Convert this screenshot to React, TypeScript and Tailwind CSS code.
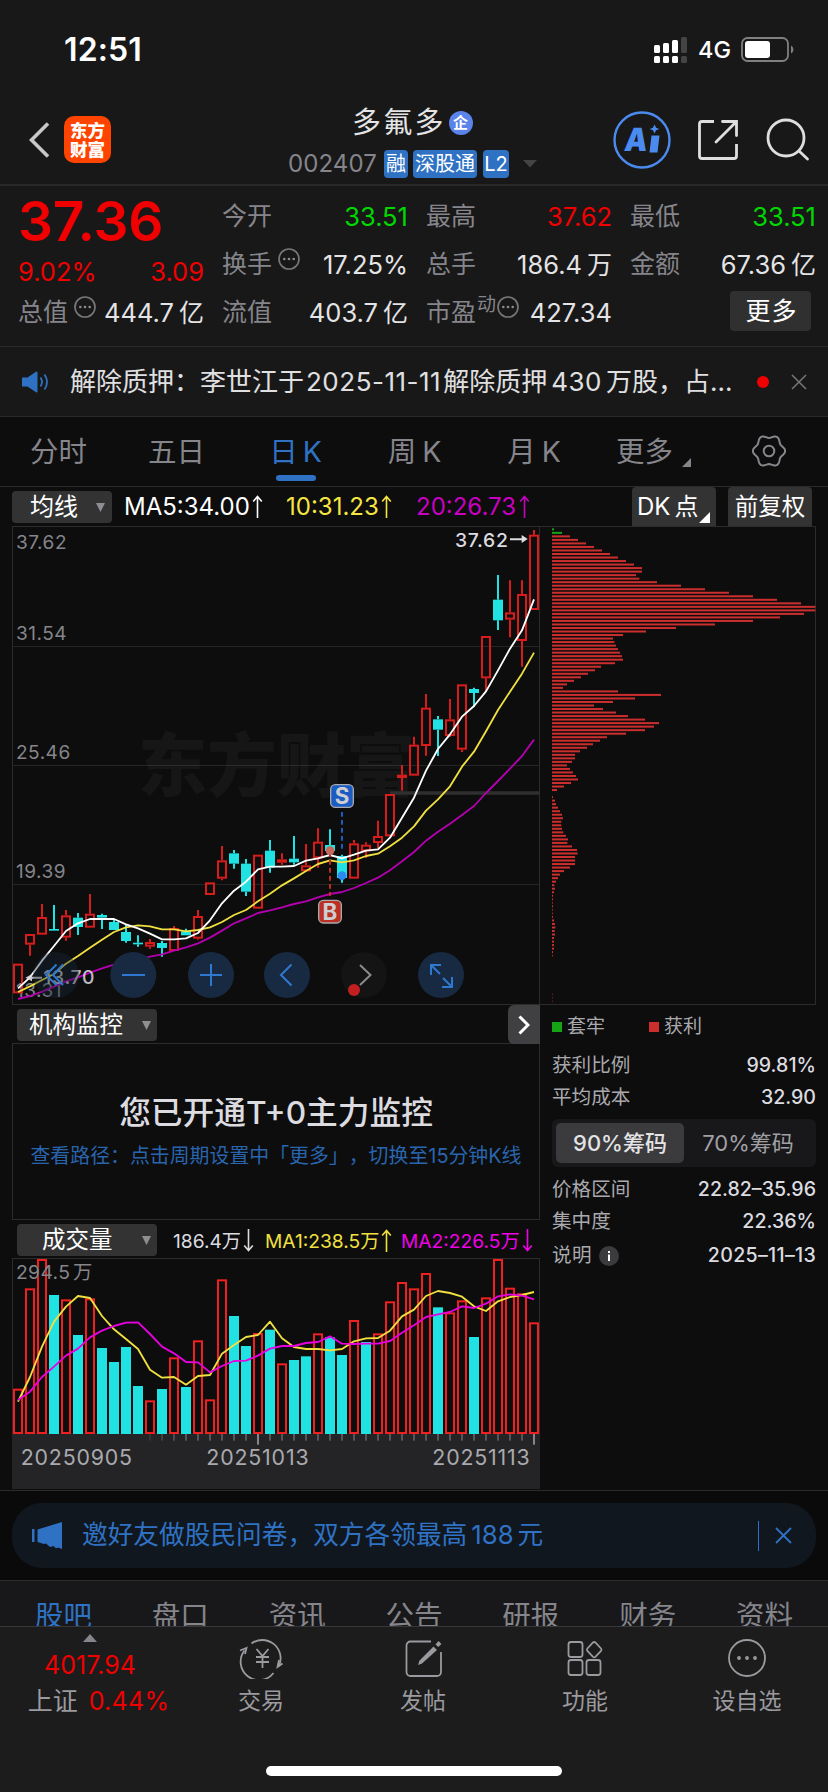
import type { ReactNode } from 'react'

type Candle = [kind: 'r' | 'c', high: number, top: number, bottom: number, low: number]

// Both charts are drawn on a grid three times finer than their size on the page
const X0 = 54
const STEP = 36

const CANDLES: Candle[] = [
  ['r', 1331, 1331, 1420, 1420], ['r', 1242, 1242, 1274, 1307], ['r', 1152, 1191, 1244, 1244], ['c', 1155, 1227, 1232, 1232],
  ['r', 1170, 1186, 1253, 1262], ['c', 1179, 1193, 1221, 1245], ['r', 1122, 1181, 1223, 1223], ['c', 1181, 1185, 1193, 1227],
  ['c', 1198, 1206, 1230, 1230], ['c', 1215, 1236, 1263, 1268], ['c', 1246, 1268, 1273, 1280], ['r', 1257, 1266, 1280, 1286],
  ['c', 1263, 1269, 1284, 1310], ['r', 1218, 1224, 1293, 1293], ['c', 1226, 1234, 1246, 1246], ['r', 1170, 1188, 1256, 1259],
  ['r', 1087, 1087, 1125, 1125], ['r', 978, 1021, 1076, 1081], ['c', 990, 1000, 1031, 1046], ['c', 1017, 1031, 1115, 1128],
  ['r', 1004, 1004, 1166, 1166], ['c', 960, 992, 1043, 1058], ['r', 1000, 1018, 1028, 1034], ['c', 948, 1016, 1027, 1034],
  ['r', 972, 1036, 1054, 1054], ['r', 925, 965, 1015, 1043], ['c', 928, 975, 993, 993], ['c', 1004, 1008, 1074, 1088],
  ['r', 960, 970, 1076, 1076], ['r', 967, 974, 994, 1014], ['r', 902, 948, 969, 985], ['r', 822, 822, 949, 949],
  ['r', 735, 764, 774, 812], ['r', 650, 674, 767, 767], ['r', 522, 563, 678, 707], ['c', 588, 598, 629, 708],
  ['r', 537, 598, 648, 650], ['r', 493, 493, 689, 696], ['c', 503, 507, 519, 560], ['r', 348, 348, 475, 515],
  ['c', 165, 239, 301, 330], ['r', 181, 277, 299, 352], ['r', 181, 222, 363, 440], ['r', 30, 44, 270, 270],
]

const MA5 = [
  1405, 1372, 1322, 1278, 1233, 1210, 1197, 1197, 1197, 1213, 1225, 1241, 1258, 1258, 1255, 1239, 1201, 1150, 1112, 1085, 1048, 1040,
  1040, 1038, 1022, 1015, 1005, 1015, 1004, 992, 988, 953, 893, 833, 752, 687, 643, 590, 558, 514, 451, 386, 331, 238,
]
const MA10 = [
  1416, 1399, 1380, 1362, 1331, 1308, 1283, 1259, 1236, 1222, 1216, 1219, 1228, 1228, 1234, 1230, 1222, 1206, 1185, 1170, 1144, 1121,
  1096, 1075, 1053, 1032, 1021, 1027, 1021, 1008, 1001, 979, 953, 919, 872, 838, 799, 740, 695, 634, 570, 515, 461, 398,
]
const MA20 = [
  1437, 1428, 1415, 1400, 1384, 1372, 1358, 1345, 1334, 1325, 1318, 1310, 1303, 1292, 1282, 1270, 1253, 1232, 1210, 1195, 1179, 1171,
  1162, 1152, 1144, 1132, 1122, 1116, 1104, 1089, 1073, 1051, 1024, 996, 962, 935, 911, 885, 858, 819, 783, 746, 708, 659,
]

const VOLUME: ['r' | 'c', number][] = [
  ['r', 446], ['r', 145], ['r', 57], ['c', 165], ['r', 178], ['c', 285], ['r', 175], ['c', 324], ['c', 366], ['c', 321], ['c', 438],
  ['r', 481], ['c', 447], ['r', 352], ['c', 441], ['r', 301], ['r', 478], ['r', 118], ['c', 228], ['c', 318], ['r', 279], ['c', 269],
  ['r', 370], ['c', 360], ['c', 349], ['r', 280], ['c', 292], ['c', 345], ['r', 240], ['c', 306], ['r', 280], ['r', 184], ['r', 126],
  ['r', 145], ['r', 99], ['c', 202], ['r', 217], ['r', 181], ['c', 291], ['r', 172], ['r', 57], ['r', 143], ['r', 160], ['r', 247],
]
const VMA1 = [
  485, 411, 320, 245, 200, 168, 174, 228, 268, 297, 327, 389, 413, 411, 434, 408, 405, 341, 315, 291, 285, 245, 295, 321, 327, 327,
  331, 327, 304, 295, 294, 272, 229, 209, 168, 153, 159, 170, 199, 213, 184, 171, 165, 156,
]
const VMA2 = [
  480, 455, 411, 380, 347, 326, 292, 272, 258, 248, 247, 282, 320, 340, 366, 367, 397, 378, 363, 362, 347, 326, 318, 318, 309, 306,
  289, 311, 312, 311, 311, 303, 278, 256, 231, 223, 216, 199, 204, 191, 169, 163, 167, 178,
]

const CHIPS = [
  6, 30, 54, 78, 102, 126, 150, 174, 198, 222, 246, 270, 270, 252, 262, 315, 387, 459, 531, 603, 675, 747, 790, 790, 756, 684, 603,
  489, 372, 282, 213, 183, 187, 192, 198, 204, 210, 213, 189, 147, 129, 108, 87, 66, 45, 33, 198, 327, 249, 183, 126, 153, 192, 228,
  279, 321, 306, 279, 222, 165, 144, 123, 105, 84, 69, 69, 60, 45, 54, 63, 72, 78, 57, 36, 15, 0, 3, 9, 12, 18, 24, 30, 33, 28, 28,
  30, 34, 42, 48, 46, 60, 75, 77, 69, 69, 69, 54, 36, 24, 18, 12, 7, 9, 6, 3, 3, 2, 3, 2, 2, 3, 6, 9, 10, 8, 9, 6, 6, 6, 6, 3, 2,
]

// Six soft teeth around the settings icon
const GEAR = Array.from({ length: 72 }, (_, i) => {
  const a = (i * Math.PI) / 36
  const r = 14.6 + 1.5 * Math.cos(6 * a)
  return `${(17 + r * Math.cos(a)).toFixed(2)},${(17 + r * Math.sin(a)).toFixed(2)}`
}).join(' ')

function points(values: number[]): string {
  return values.map((v, i) => `${X0 + i * STEP},${v}`).join(' ')
}

function MoreDots() {
  return (
    <svg width="22" height="22" viewBox="0 0 22 22" className="shrink-0">
      <circle cx="11" cy="11" r="10" fill="none" stroke="#77777b" strokeWidth="1.7" />
      <circle cx="6.3" cy="11" r="1.3" fill="#8a8a8f" />
      <circle cx="11" cy="11" r="1.3" fill="#8a8a8f" />
      <circle cx="15.7" cy="11" r="1.3" fill="#8a8a8f" />
    </svg>
  )
}

function StatusBar() {
  return (
    <div className="flex h-20 items-start justify-between pt-[30px] pr-[33px] pl-[64px]">
      <span className="text-[32px] leading-10 font-semibold tracking-[0.1px] text-white">12:51</span>
      <div className="flex h-10 items-center">
        <svg width="34" height="27" viewBox="0 0 34 27" fill="#fff">
          <rect x="0" y="8" width="6" height="8" rx="1.5" />
          <rect x="9" y="6" width="6" height="10" rx="1.5" />
          <rect x="18" y="3" width="6" height="13" rx="1.5" />
          <rect x="27" y="0" width="6" height="16" rx="1.5" fill="#444" />
          <rect x="0" y="19" width="6" height="7" rx="1.5" />
          <rect x="9" y="19" width="6" height="7" rx="1.5" />
          <rect x="18" y="19" width="6" height="7" rx="1.5" />
          <rect x="27" y="19" width="6" height="7" rx="1.5" fill="#444" />
        </svg>
        <span className="ml-[10px] w-8 text-[23.5px] leading-8 font-medium text-white">4G</span>
        <svg width="54" height="26" viewBox="0 0 54 26" className="ml-[11px]">
          <rect x="1" y="1" width="46" height="23" rx="5.5" fill="none" stroke="#808080" strokeWidth="1.8" />
          <rect x="4" y="4" width="25" height="17" rx="3" fill="#fff" />
          <path d="M50 8.500a4.500 4.500 0 0 1 0 8z" fill="#808080" />
        </svg>
      </div>
    </div>
  )
}

function Header() {
  return (
    <div className="flex h-[106px] items-start border-b-2 border-[#282829] pt-3">
      <div className="flex w-[288px] items-center pt-6 pl-[29px]">
        <svg width="21" height="36" viewBox="0 0 21 36" fill="none" stroke="#c8c8c8" strokeWidth="3.600">
          <path d="M19 1.500 2.500 18 19 34.500" />
        </svg>
        <div className="ml-[14px] flex size-[47px] flex-col items-center justify-center rounded-[10px] bg-[#ff4400] text-[17.500px] leading-[19px] font-black text-white">
          <span>东方</span>
          <span>财富</span>
        </div>
      </div>
      <div className="flex w-[254px] flex-col">
        <div className="mt-[11px] flex h-10 items-center pl-[64px]">
          <span className="text-[29px] leading-10 tracking-[2.200px] text-[#e4e4e6]">多氟多</span>
          <span className="ml-[3px] flex size-6 items-center justify-center rounded-full bg-[#5b84ea] text-[15px] leading-6 font-bold text-white">
            企
          </span>
        </div>
        <div className="mt-[3px] flex h-8 items-center pt-1 text-[20px] text-white">
          <span className="w-24 text-[24px] tracking-[0.1px] text-[#85858b]">002407</span>
          <span className="flex h-7 w-6 items-center justify-center rounded-[4px] bg-[#2f72c4]">融</span>
          <span className="ml-[5px] flex h-7 w-16 items-center justify-center rounded-[4px] bg-[#2f72c4] whitespace-nowrap">深股通</span>
          <span className="ml-[6px] flex h-7 w-[26px] items-center justify-center rounded-[4px] bg-[#2f72c4]">L2</span>
          <svg width="14" height="8" viewBox="0 0 14 8" className="ml-[14px]">
            <path d="M0 0h14L7 7.500z" fill="#444447" />
          </svg>
        </div>
      </div>
      <svg width="268" height="64" viewBox="0 0 268 64" className="mt-4" fill="none">
        <circle cx="100" cy="32" r="27.500" stroke="#4b8bf0" strokeWidth="2.400" />
        <text transform="translate(81.500 43) skewX(-7)" fontSize="32" fontWeight="900" fill="#4b8bf0" textLength="23" lengthAdjust="spacingAndGlyphs" className="font-['Inter']">
          A
        </text>
        <path d="M109.500 27.500h8l-2 17h-8z" fill="#4b8bf0" />
        <path d="M112.500 16.500l1.600 3.200 3.200 1.300-3.200 1.300-1.600 3.200-1.600-3.200-3.200-1.300 3.200-1.300z" fill="#4b8bf0" />
        <g stroke="#dedede" strokeWidth="2.800">
          <path d="M172 13.500H160a2.500 2.500 0 0 0-2.500 2.500V48a2.500 2.500 0 0 0 2.500 2.500H192a2.500 2.500 0 0 0 2.500-2.500V36" />
          <path d="M180.500 13.500h14v14M194 14l-20 20" strokeLinecap="round" />
          <circle cx="244" cy="30" r="18" />
          <path d="M257 43l8.500 8" strokeLinecap="round" />
        </g>
      </svg>
    </div>
  )
}

interface StatProps {
  label: string
  value: string
  unit?: string
  tone?: string
  mark?: ReactNode
  className?: string
}

function Stat({ label, value, unit, tone = 'text-[#e4e4e6]', mark, className = '' }: StatProps) {
  return (
    <div className={`flex h-12 items-center justify-between whitespace-nowrap ${className}`}>
      <span className="flex items-center text-[25px] text-[#85858b]">
        {label}
        {mark}
      </span>
      <span className={`text-[25.500px] ${tone}`}>
        {value}
        {unit && <span className="ml-[5px] text-[25px]">{unit}</span>}
      </span>
    </div>
  )
}

function Quote() {
  return (
    <div className="flex h-[161px] items-start border-b border-[#2a2a2b] pt-[7px] pl-[18px]">
      <div className="w-[186px]">
        <div className="flex h-[55px] items-center pt-[2px] text-[55px] font-semibold tracking-[-0.2px] text-[#f00000]">37.36</div>
        <div className="flex h-12 items-center justify-between text-[25.500px] text-[#f00000]">
          <span>9.02%</span>
          <span>3.09</span>
        </div>
        <Stat label="总值" value="444.7" unit="亿" className="-mt-[7px]" mark={<span className="-mt-3 ml-[6px]"><MoreDots /></span>} />
      </div>
      <div className="ml-[18px] w-[186px]">
        <Stat label="今开" value="33.51" tone="text-[#00d800]" />
        <Stat label="换手" value="17.25%" mark={<span className="-mt-3 ml-[6px]"><MoreDots /></span>} />
        <Stat label="流值" value="403.7" unit="亿" />
      </div>
      <div className="ml-[18px] w-[186px]">
        <Stat label="最高" value="37.62" tone="text-[#f00000]" />
        <Stat label="总手" value="186.4" unit="万" />
        <Stat
          label="市盈"
          value="427.34"
          mark={
            <>
              <span className="-mt-4 ml-px text-[19px]">动</span>
              <span className="-mt-3 ml-px"><MoreDots /></span>
            </>
          }
        />
      </div>
      <div className="ml-[18px] w-[186px]">
        <Stat label="最低" value="33.51" tone="text-[#00d800]" />
        <Stat label="金额" value="67.36" unit="亿" />
        <div className="flex justify-end pt-[2px] pr-[5px]">
          <button type="button" className="h-10 w-[81px] rounded-[4px] bg-[#303030] pl-[2px] text-[25px] leading-10 tracking-[1px] text-white">
            更多
          </button>
        </div>
      </div>
    </div>
  )
}

function Notice() {
  return (
    <div className="flex h-[70px] items-center border-b border-[#2a2a2b] pl-[22px]">
      <svg width="28" height="22" viewBox="0 0 28 22" fill="#2f72c4">
        <path d="M0 6.500h5.500L14 .8q1.500-.8 1.500 1v18.400q0 1.800-1.500 1L5.500 15.500H0z" />
        <path d="M18.500 6.500q3 4.500 0 9M22.500 3.500q5 7.500 0 15" fill="none" stroke="#2f72c4" strokeWidth="1.800" />
      </svg>
      <p className="ml-5 flex w-[662px] items-center text-[26px] whitespace-nowrap text-[#e0e0e2]">
        <span>解除质押：李世江于</span>
        <span className="mx-[2px] tracking-[0.5px]">2025-11-11</span>
        <span>解除质押</span>
        <span className="mx-[4px] tracking-[0.5px]">430</span>
        <span>万股，占</span>
        <span>...</span>
      </p>
      <span className="ml-[25px] size-3 rounded-full bg-[#f00000]" />
      <svg width="16" height="16" viewBox="0 0 16 16" className="ml-[22px]" stroke="#77777b" strokeWidth="1.500">
        <path d="M1 1l14 14M15 1L1 15" />
      </svg>
    </div>
  )
}

function PeriodTabs() {
  return (
    <div className="flex h-[70px] border-b border-[#2a2a2b] bg-[#0d0d0d] pt-[13px] text-[28.500px] leading-[44px] text-[#85858b]">
      <span className="w-[118px] pl-[30px]">分时</span>
      <span className="w-[119px] pl-[30px]">五日</span>
      <span className="flex w-[118px] flex-col items-center text-[#2f72c4]">
        <span className="tracking-[1px]">日<span className="ml-1">K</span></span>
        <span className="mt-[1px] h-[6px] w-10 rounded-[3px] bg-[#2f72c4]" />
      </span>
      <span className="w-[119px] text-center">周<span className="ml-[6px]">K</span></span>
      <span className="w-[120px] text-center">月<span className="ml-[6px]">K</span></span>
      <span className="flex w-[134px] pl-[22px]">
        更多
        <svg width="9" height="9" viewBox="0 0 9 9" className="mt-7 ml-[9px]">
          <path d="M9 0v9H0z" fill="#85858b" />
        </svg>
      </span>
      <svg width="34" height="34" viewBox="0 0 34 34" className="mt-[4px] ml-[24px]" fill="none" stroke="#85858b" strokeWidth="2">
        <polygon points={GEAR} strokeLinejoin="round" />
        <circle cx="17" cy="17" r="5.300" />
      </svg>
    </div>
  )
}

function Caret({ className = '' }: { className?: string }) {
  return (
    <svg width="9" height="9" viewBox="0 0 9 9" className={className}>
      <path d="M0 0h9L4.500 9z" fill="#8e8e93" />
    </svg>
  )
}

function Arrow({ down = false }: { down?: boolean }) {
  return (
    <svg width="11" height="23" viewBox="0 0 11 23" fill="none" stroke="currentColor" strokeWidth="1.600" className={down ? 'rotate-180' : ''}>
      <path d="M5.500 23V1.500M1.200 6.500l4.300-5 4.300 5" />
    </svg>
  )
}

function MaBar() {
  return (
    <div className="flex h-[39px] text-[24px] whitespace-nowrap">
      <div className="mt-[4px] ml-3 flex h-8 w-[100px] items-center rounded-[4px] bg-[#333334] pl-[18px] text-white">
        <span className="w-[66px]">均线</span>
        <Caret />
      </div>
      <div className="flex w-[520px] items-center pl-3">
        <span className="flex w-[162px] items-center gap-[2px] text-white">MA5:34.00<Arrow /></span>
        <span className="flex w-[130px] items-center gap-[2px] text-[#f5e642]">10:31.23<Arrow /></span>
        <span className="flex items-center gap-[3px] text-[#c800c0]">20:26.73<Arrow /></span>
      </div>
      <div className="relative flex h-[39px] w-[84px] items-center rounded-t-[4px] bg-[#333334] pl-[5px] text-white">
        DK<span className="ml-1">点</span>
        <svg width="11" height="11" viewBox="0 0 11 11" className="absolute right-[6px] bottom-[3px]">
          <path d="M11 0v11H0z" fill="#fff" />
        </svg>
      </div>
      <div className="ml-3 flex h-[39px] w-[84px] items-center justify-center rounded-t-[4px] bg-[#333334] text-[23.500px] text-white">前复权</div>
    </div>
  )
}

function Tag({ x, y, letter, fill }: { x: number; y: number; letter: string; fill: string }) {
  return (
    <g>
      <rect x={x - 34} y={y - 34} width="68" height="68" rx="14" fill={fill} stroke="#a9a9ae" strokeWidth="4" />
      <text x={x} y={y + 24} textAnchor="middle" fontSize="67" fontWeight="700" fill="#cdcdd2">
        {letter}
      </text>
    </g>
  )
}

function CandleChart() {
  return (
    <svg width="528" height="479" viewBox="36 18 1584 1437" className="block font-['Inter','Noto_Sans_CJK_SC',sans-serif]">
      <rect x="37.500" y="19.500" width="1581" height="1434" fill="none" stroke="#2c2c2d" strokeWidth="3" />
      <path d="M38 379.500H1618M38 736.500H1618M38 1093.500H1618" stroke="#252526" strokeWidth="3" />
      <text x="414" y="812" fontSize="208" fontWeight="900" fill="#fff" fillOpacity="0.04">
        东方财富
      </text>
      <g fontSize="57" fill="#85858b" letterSpacing="1.500">
        <text x="48" y="88">37.62</text>
        <text x="48" y="361">31.54</text>
        <text x="48" y="717">25.46</text>
        <text x="48" y="1074">19.39</text>
        <text x="48" y="1431">13.31</text>
      </g>
      <path d="M1170 819H1618" stroke="#2f2f30" strokeWidth="10" />
      {CANDLES.map(([kind, high, top, bottom, low], i) => {
        const x = X0 + i * STEP
        const color = kind === 'r' ? '#d81c1c' : '#20e2e2'
        return (
          <g key={i} stroke={color} strokeWidth="6">
            {high < top && <path d={`M${x} ${high}V${top}`} />}
            {low > bottom && <path d={`M${x} ${bottom}V${low}`} />}
            {kind === 'r' ? (
              <rect x={x - 12} y={top + 3} width="24" height={Math.max(bottom - top - 6, 2)} fill="none" />
            ) : (
              <rect x={x - 15} y={top} width="30" height={bottom - top} fill={color} stroke="none" />
            )}
          </g>
        )
      })}
      <g fill="none" strokeWidth="5.500" strokeLinejoin="round">
        <polyline points={points(MA20)} stroke="#b400b0" />
        <polyline points={points(MA10)} stroke="#f0e040" />
        <polyline points={points(MA5)} stroke="#fff" />
      </g>
      <path d="M1026 876V986" stroke="#1a5cc4" strokeWidth="6" strokeDasharray="14 10" />
      <path d="M990 996V1128" stroke="#c02a20" strokeWidth="6" strokeDasharray="14 10" />
      <circle cx="990" cy="992" r="13" fill="#c8685c" />
      <circle cx="1026" cy="1067" r="13" fill="#2a8af0" />
      <Tag x={1026} y={828} letter="S" fill="#1a5cc4" />
      <Tag x={990} y={1175} letter="B" fill="#bc3024" />
      <g fill="#dcdce0" fontSize="58" fontWeight="500" letterSpacing="2">
        <text x="1365" y="81">37.62</text>
        <path d="M1530 54.500H1565V45l18 12-18 12V60.500H1530z" />
        <text x="130" y="1393" fillOpacity="0.85">13.70</text>
        <path d="M126 1370H96V1362l-20 11 20 11V1376H126z" fillOpacity="0.900" />
      </g>
    </svg>
  )
}

function ChartControls() {
  return (
    <svg width="450" height="48" viewBox="0 0 450 48" className="absolute top-[425px] left-8" fill="none" strokeWidth="2">
      <circle cx="24" cy="24" r="23" fill="#17283a" fillOpacity="0.400" />
      <g fill="#182a42">
        <circle cx="101.300" cy="24" r="23" />
        <circle cx="179" cy="24" r="23" />
        <circle cx="255" cy="24" r="23" />
        <circle cx="409" cy="24" r="23" />
      </g>
      <circle cx="332" cy="24" r="23" fill="#141414" />
      <g stroke="#2f78cf">
        <path d="M24.500 13.500 14 24l10.500 10M31 13.500 21 24l10 10" />
        <path d="M90 24h23M168 24h22M179 13v22M259.500 13.500 249 24l10.500 10.500" />
        <path d="M399 24V14H409M399 14l9 9M420 26V36H410M420 36l-9-9" />
      </g>
      <path d="M328 14l10.500 10L328 34" stroke="#8a8a8f" />
      <circle cx="322" cy="39" r="6" fill="#c22020" />
    </svg>
  )
}

function ChipChart() {
  return (
    <svg width="276" height="479" viewBox="0 18 828 1437" className="block">
      <path d="M0 19.500H826.500V1453.500H0" fill="none" stroke="#2c2c2d" strokeWidth="3" />
      {CHIPS.map((width, i) => (
        <rect key={i} x="36" y={25 + i * 10.57} width={width} height="6" fill={i < 2 ? '#14a414' : '#cc2e2e'} />
      ))}
      <path d="M37.500 1420v29" stroke="#7a2020" strokeWidth="2" strokeDasharray="6 4.500" />
    </svg>
  )
}

function PanelSelect({ label, indent }: { label: string; indent: string }) {
  return (
    <div className={`flex h-8 w-[140px] items-center justify-between rounded-[4px] bg-[#333334] pr-[6px] text-[23.500px] text-white ${indent}`}>
      {label}
      <Caret />
    </div>
  )
}

function Monitor() {
  return (
    <>
      <div className="flex h-[38px] items-start justify-between pl-[5px]">
        <div className="pt-1">
          <PanelSelect label="机构监控" indent="pl-3" />
        </div>
        <div className="flex h-[39px] w-8 items-center justify-center rounded-l-[6px] bg-[#404042]">
          <svg width="12" height="20" viewBox="0 0 12 20" fill="none" stroke="#fff" strokeWidth="3">
            <path d="M1.500 1.500 10 10l-8.500 8.500" />
          </svg>
        </div>
      </div>
      <div className="flex h-[177px] flex-col items-center border border-[#2c2c2d] pt-[47px] whitespace-nowrap">
        <div className="text-[31.700px] leading-[44px] font-medium text-[#dcdce0]">您已开通T+0主力监控</div>
        <div className="mt-[7px] text-[19.900px] leading-7 text-[#2865ae] [text-spacing-trim:space-all]">
          查看路径：点击周期设置中「更多」，切换至15分钟K线
        </div>
      </div>
    </>
  )
}

function VolumeChart() {
  return (
    <>
      <div className="flex h-[38px] items-center pt-[2px] pl-[5px] whitespace-nowrap">
        <PanelSelect label="成交量" indent="pl-[25px]" />
        <div className="flex items-center pt-[2px] pl-[16px] text-[19.200px]">
          <span className="flex w-[92px] items-center gap-[2px] text-[#dcdce0]">186.4万<Arrow down /></span>
          <span className="flex w-[136px] items-center gap-[2px] text-[#f0e040]">MA1:238.5万<Arrow /></span>
          <span className="flex items-center gap-[2px] text-[#f000e8]">MA2:226.5万<Arrow down /></span>
        </div>
      </div>
      <svg width="528" height="231" viewBox="36 54 1584 693" className="block font-['Inter','Noto_Sans_CJK_SC',sans-serif]">
        <rect x="37.500" y="55.500" width="1581" height="526" fill="none" stroke="#2c2c2d" strokeWidth="3" />
        <rect x="36" y="582" width="1584" height="165" fill="#242426" />
        {VOLUME.map(([kind, top], i) => {
          const x = X0 + i * STEP
          return kind === 'r' ? (
            <rect key={i} x={x - 12} y={top + 3} width="24" height={576 - top} fill="none" stroke="#f02020" strokeWidth="6" />
          ) : (
            <rect key={i} x={x - 15} y={top} width="30" height={582 - top} fill="#20e2e2" />
          )
        })}
        {VOLUME.map((_, i) => {
          if (i < 11) return null
          const major = i === 20 || i === 43
          return <rect key={i} x={X0 + i * STEP - 3} y="582" width="6" height={major ? 32 : 20} fill={major ? '#85858b' : '#55555a'} fillOpacity={i < 14 ? 0.3 + (i - 11) * 0.25 : 1} />
        })}
        <g fill="none" strokeWidth="5.500" strokeLinejoin="round">
          <polyline points={points(VMA1)} stroke="#f0e040" />
          <polyline points={points(VMA2)} stroke="#e800e0" />
        </g>
        <text x="48" y="118" fontSize="58" fill="#85858b" letterSpacing="1">
          294.5<tspan dx="8">万</tspan>
        </text>
        <g fontSize="64" fill="#a9a9ae" letterSpacing="2.500">
          <text x="62" y="676">20250905</text>
          <text x="619" y="676">20251013</text>
          <text x="1297" y="676">20251113</text>
        </g>
      </svg>
    </>
  )
}

function InfoRow({ label, value, className = '' }: { label: ReactNode; value: string; className?: string }) {
  return (
    <div className={`flex h-8 items-center justify-between text-[19.600px] ${className}`}>
      <span className="flex items-center text-[#a9a9ae]">{label}</span>
      <span className="font-medium text-[#dcdce0]">{value}</span>
    </div>
  )
}

function ChipInfo() {
  return (
    <div className="w-[276px] pt-[9px] pl-3 whitespace-nowrap">
      <div className="flex h-[26px] items-center text-[19px] text-[#a9a9ae]">
        <span className="mr-[5px] size-[10px] bg-[#14a414]" />
        <span className="w-[82px]">套牢</span>
        <span className="mr-[5px] size-[10px] bg-[#cc2e2e]" />
        <span>获利</span>
      </div>
      <InfoRow label="获利比例" value="99.81%" className="mt-[10px]" />
      <InfoRow label="平均成本" value="32.90" />
      <div className="mt-[5px] flex h-12 items-center rounded-[6px] bg-[#18181a] p-1 text-[22px]">
        <span className="flex h-10 w-32 items-center justify-center rounded-[5px] bg-[#3b3b3d] font-medium text-[#e4e4e6]">90%筹码</span>
        <span className="flex-1 text-center text-[#a0a0a5]">70%筹码</span>
      </div>
      <InfoRow label="价格区间" value="22.82–35.96" className="mt-[7px]" />
      <InfoRow label="集中度" value="22.36%" />
      <InfoRow
        className="mt-[2px] tracking-[0.300px]"
        value="2025–11–13"
        label={
          <>
            说明
            <svg width="20" height="20" viewBox="0 0 20 20" className="ml-[7px]">
              <circle cx="10" cy="10" r="10" fill="#3b3b3d" />
              <path d="M10 8.500V15M10 5v2" stroke="#fff" strokeWidth="2" />
            </svg>
          </>
        }
      />
    </div>
  )
}

function Banner() {
  return (
    <div className="h-[91px] border-y border-[#2c2c2d] bg-[#0a0a0a] px-3 pt-3">
      <div className="flex h-[65px] items-center rounded-[30px] bg-[#10171f] pl-5 text-[#2f72c4]">
        <svg width="31" height="27" viewBox="0 0 31 27" fill="#2f72c4">
          <path d="M0 7h2.500v13H0zM5.500 7.500 30 0v27l-4-1.500-2 .8-2.500-2.300-3.500 1-4-3.500-2 .5L5.500 20z" />
        </svg>
        <span className="ml-[19px] flex w-[676px] text-[25.700px] whitespace-nowrap">
          邀好友做股民问卷，双方各领最高<span className="mx-[4px]">188</span>元
        </span>
        <span className="h-[30px] w-px bg-[#2f72c4]" />
        <svg width="17" height="17" viewBox="0 0 17 17" className="ml-4" stroke="#2f72c4" strokeWidth="1.800">
          <path d="M1 1l15 15M16 1L1 16" />
        </svg>
      </div>
    </div>
  )
}

const SECTIONS = ['股吧', '盘口', '资讯', '公告', '研报', '财务', '资料']

function SectionTabs() {
  return (
    <div className="flex h-[45px] justify-between overflow-hidden bg-[#18181a] px-[35px] pt-[13px] text-[28.500px] leading-[44px] whitespace-nowrap text-[#85858b]">
      {SECTIONS.map((name, i) => (
        <span key={name} className={i === 0 ? 'text-[#2f72c4]' : undefined}>
          {name}
        </span>
      ))}
    </div>
  )
}

function NavItem({ label, children }: { label: string; children: ReactNode }) {
  return (
    <div className="flex w-[162px] flex-col items-center">
      <svg width="46" height="42" viewBox="0 0 46 42" fill="none" stroke="#9a9a9f" strokeWidth="1.800">
        {children}
      </svg>
      <span className="mt-[4px] text-[23px] leading-9 text-[#9a9a9f]">{label}</span>
    </div>
  )
}

function BottomNav() {
  return (
    <div className="relative flex h-[166px] border-t border-[#38383a] bg-[#1c1c1c] pt-[10px]">
      <div className="flex w-[180px] flex-col items-center text-[25px] text-[#f00000]">
        <svg width="14" height="8" viewBox="0 0 14 8" className="-mt-[3px]">
          <path d="M7 0l7 8H0z" fill="#85858b" />
        </svg>
        <span className="mt-[5px] leading-9">4017.94</span>
        <span className="ml-[17px] leading-9">
          <span className="mr-[11px] text-[25px] text-[#9a9a9f]">上证</span>
          <span className="tracking-[0.300px]">0.44%</span>
        </span>
      </div>
      <NavItem label="交易">
        <path d="M13.500 6.500A18.300 18.300 0 0 1 41.500 27.500l-1 2M35.500 36A18.300 18.300 0 0 1 6.500 13.500" />
        <path d="M2 13.500l6.500-2.500-1.500 6M44.500 26.500l-5 3.500 1.500-7" />
        <path d="M18.500 12l6 7 6-7M24.500 19v12M18 20h13M18 25h13" />
      </NavItem>
      <NavItem label="发帖">
        <path d="M31 4.500H10.500a4 4 0 0 0-4 4V35a4 4 0 0 0 4 4H37a4 4 0 0 0 4-4V15" />
        <path d="M33.500 9.500l3.500 3.500L22 26.500l-4 1.500 1.500-4.500zM35.500 7.500l3-3.500 3 3-3.300 3z" fill="#9a9a9f" stroke="none" />
      </NavItem>
      <NavItem label="功能">
        <rect x="6.500" y="5" width="14" height="15" rx="2.500" />
        <rect x="6.500" y="23" width="14" height="15" rx="2.500" />
        <rect x="24.500" y="23" width="14" height="15" rx="2.500" />
        <path d="M31 5.500q1.200-1 2.400 0l5.600 6q1 1.200 0 2.400l-5.600 6q-1.200 1-2.400 0l-5.600-6q-1-1.200 0-2.400z" />
      </NavItem>
      <NavItem label="设自选">
        <circle cx="23" cy="21" r="18" />
        <g fill="#9a9a9f" stroke="none">
          <circle cx="15" cy="21" r="1.900" />
          <circle cx="23" cy="21" r="1.900" />
          <circle cx="31" cy="21" r="1.900" />
        </g>
      </NavItem>
      <div className="absolute bottom-4 left-[266px] h-[10px] w-[296px] rounded-full bg-white" />
    </div>
  )
}

export default function App() {
  return (
    <div className="h-[1792px] w-[828px] overflow-hidden bg-[#0d0d0d] font-['Inter','Noto_Sans_CJK_SC',sans-serif]">
      <div className="bg-[#181818]">
        <StatusBar />
        <Header />
        <Quote />
        <Notice />
      </div>
      <PeriodTabs />
      <MaBar />
      <div className="relative flex pl-3">
        <CandleChart />
        <ChipChart />
        <ChartControls />
      </div>
      <div className="flex h-[485px] pl-3">
        <div className="w-[528px]">
          <Monitor />
          <VolumeChart />
        </div>
        <ChipInfo />
      </div>
      <Banner />
      <SectionTabs />
      <BottomNav />
    </div>
  )
}
